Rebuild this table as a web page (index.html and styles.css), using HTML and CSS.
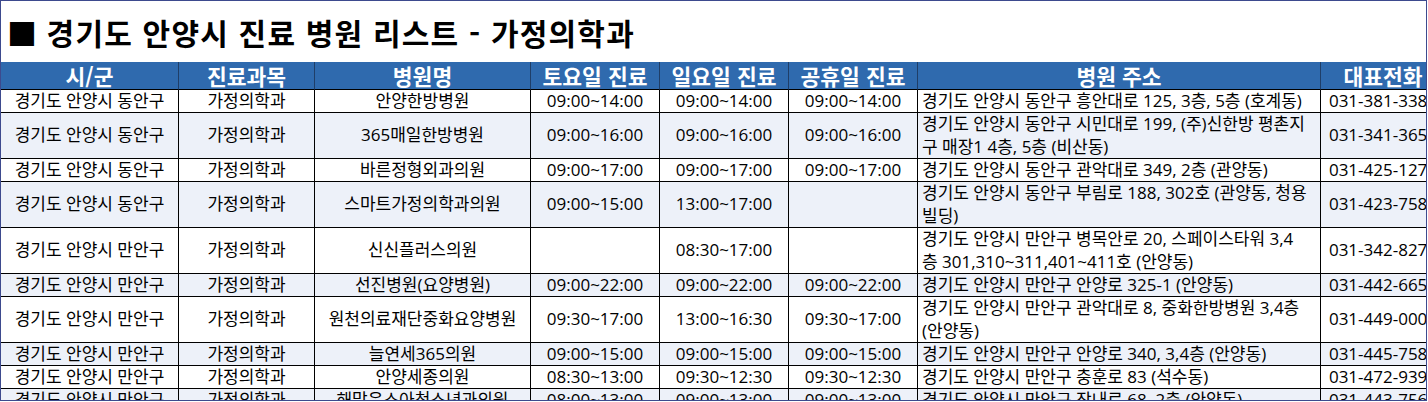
FILE: index.html
```html
<!DOCTYPE html>
<html lang="ko">
<head>
<meta charset="utf-8">
<title>경기도 안양시 진료 병원 리스트 - 가정의학과</title>
<link rel="stylesheet" href="styles.css">
</head>
<body>
<div class="sheet">
  <h1 class="title"><span class="mark">■</span> 경기도 안양시 진료 병원 리스트 - 가정의학과</h1>
  <table class="grid">
    <colgroup>
      <col class="c-city"><col class="c-dept"><col class="c-name"><col class="c-time"><col class="c-time"><col class="c-time"><col class="c-addr"><col class="c-tel">
    </colgroup>
    <thead>
      <tr><th>시/군</th><th>진료과목</th><th>병원명</th><th>토요일 진료</th><th>일요일 진료</th><th>공휴일 진료</th><th>병원 주소</th><th>대표전화</th></tr>
    </thead>
    <tbody>
      <tr><td>경기도 안양시 동안구</td><td>가정의학과</td><td>안양한방병원</td><td>09:00~14:00</td><td>09:00~14:00</td><td>09:00~14:00</td><td class="addr">경기도 안양시 동안구 흥안대로 125, 3층, 5층 (호계동)</td><td>031-381-3388</td></tr>
      <tr class="tall alt"><td>경기도 안양시 동안구</td><td>가정의학과</td><td>365매일한방병원</td><td>09:00~16:00</td><td>09:00~16:00</td><td>09:00~16:00</td><td class="addr">경기도 안양시 동안구 시민대로 199, (주)신한방 평촌지<br>구 매장1 4층, 5층 (비산동)</td><td>031-341-3650</td></tr>
      <tr><td>경기도 안양시 동안구</td><td>가정의학과</td><td>바른정형외과의원</td><td>09:00~17:00</td><td>09:00~17:00</td><td>09:00~17:00</td><td class="addr">경기도 안양시 동안구 관악대로 349, 2층 (관양동)</td><td>031-425-1275</td></tr>
      <tr class="tall alt"><td>경기도 안양시 동안구</td><td>가정의학과</td><td>스마트가정의학과의원</td><td>09:00~15:00</td><td>13:00~17:00</td><td></td><td class="addr">경기도 안양시 동안구 부림로 188, 302호 (관양동, 청용<br>빌딩)</td><td>031-423-7582</td></tr>
      <tr class="tall"><td>경기도 안양시 만안구</td><td>가정의학과</td><td>신신플러스의원</td><td></td><td>08:30~17:00</td><td></td><td class="addr">경기도 안양시 만안구 병목안로 20, 스페이스타워 3,4<br>층 301,310~311,401~411호 (안양동)</td><td>031-342-8275</td></tr>
      <tr class="alt"><td>경기도 안양시 만안구</td><td>가정의학과</td><td>선진병원(요양병원)</td><td>09:00~22:00</td><td>09:00~22:00</td><td>09:00~22:00</td><td class="addr">경기도 안양시 만안구 안양로 325-1 (안양동)</td><td>031-442-6655</td></tr>
      <tr class="tall"><td>경기도 안양시 만안구</td><td>가정의학과</td><td>원천의료재단중화요양병원</td><td>09:30~17:00</td><td>13:00~16:30</td><td>09:30~17:00</td><td class="addr">경기도 안양시 만안구 관악대로 8, 중화한방병원 3,4층<br>(안양동)</td><td>031-449-0005</td></tr>
      <tr class="alt"><td>경기도 안양시 만안구</td><td>가정의학과</td><td>늘연세365의원</td><td>09:00~15:00</td><td>09:00~15:00</td><td>09:00~15:00</td><td class="addr">경기도 안양시 만안구 안양로 340, 3,4층 (안양동)</td><td>031-445-7585</td></tr>
      <tr><td>경기도 안양시 만안구</td><td>가정의학과</td><td>안양세종의원</td><td>08:30~13:00</td><td>09:30~12:30</td><td>09:30~12:30</td><td class="addr">경기도 안양시 만안구 충훈로 83 (석수동)</td><td>031-472-9395</td></tr>
      <tr class="alt"><td>경기도 안양시 만안구</td><td>가정의학과</td><td>해맑은소아청소년과의원</td><td>08:00~13:00</td><td>09:00~13:00</td><td>09:00~13:00</td><td class="addr">경기도 안양시 만안구 장내로 68, 2층 (안양동)</td><td>031-443-7560</td></tr>
    </tbody>
  </table>
</div>
</body>
</html>
```
FILE: styles.css
```css
html, body {
  margin: 0;
  padding: 0;
  background: #ffffff;
}

.sheet {
  box-sizing: border-box;
  width: 1427px;
  height: 401px;
  border: 1px solid #3d4a8e;
  overflow: hidden;
  background: #ffffff;
}

.title {
  margin: 0;
  height: 61px;
  line-height: 63px;
  padding-left: 6px;
  font-family: "Noto Sans CJK KR", sans-serif;
  font-size: 30px;
  font-weight: 700;
  letter-spacing: 1.2px;
  color: #000000;
  white-space: nowrap;
  overflow: hidden;
}

.mark {
  letter-spacing: 0;
}

.grid {
  border-collapse: separate;
  border-spacing: 0;
  table-layout: fixed;
  width: 1445px;
  font-family: "Open Sans", "Noto Sans CJK KR", sans-serif;
  font-size: 17px;
  color: #000000;
}

.c-city { width: 178px; }
.c-dept { width: 136px; }
.c-name { width: 216px; }
.c-time { width: 129px; }
.c-addr { width: 403px; }
.c-tel  { width: 125px; }

.grid th {
  background: #2f6aae;
  color: #ffffff;
  font-family: "Noto Sans CJK KR", sans-serif;
  font-size: 21.5px;
  font-weight: 700;
  height: 27px;
  line-height: 27px;
  padding: 0;
  border-right: 1px solid #1f3e68;
  border-bottom: 1px solid #000000;
  white-space: nowrap;
  text-align: center;
}

.grid td {
  padding: 0;
  line-height: 22px;
  text-align: center;
  vertical-align: middle;
  border-right: 1px solid #000000;
  border-bottom: 1px solid #000000;
  white-space: nowrap;
  overflow: hidden;
}

.grid tr.tall td {
  line-height: 22.5px;
}

.grid tr.alt td {
  background: #edf1f9;
}

.grid td.addr {
  text-align: left;
  padding-left: 4px;
}
```
